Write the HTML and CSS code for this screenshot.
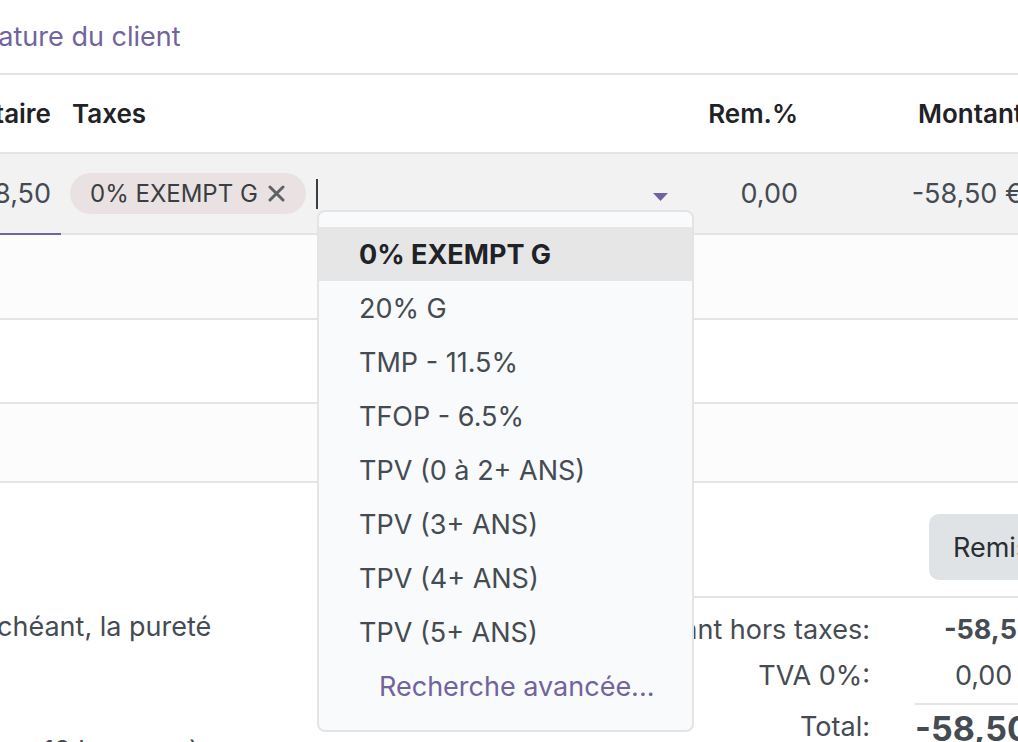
FILE: index.html
```html
<!DOCTYPE html>
<html lang="fr">
<head>
<meta charset="utf-8">
<title>Facture</title>
<link rel="stylesheet" href="styles.css">
</head>
<body>
<div class="page">
  <div class="top">
    <a class="sig-link" href="#">Signature du client</a>
  </div>

  <div class="lines">
    <div class="cell head c1">Prix unitaire</div>
    <div class="cell head c2">Taxes</div>
    <div class="cell head c3">Rem.%</div>
    <div class="cell head c4">Montant</div>

    <div class="cell data c1"><span class="input">-58,50</span></div>
    <div class="cell data c2">
      <span class="tag">0% EXEMPT G
        <svg class="tag-x" width="17" height="17" viewBox="0 0 17 17"><path d="M2 2 L15 15 M15 2 L2 15" stroke="#5e6166" stroke-width="3" stroke-linecap="round"/></svg>
      </span>
      <span class="caret-cursor"></span>
      <span class="grow"></span>
      <svg class="dd-caret" width="15" height="8" viewBox="0 0 15 8"><path d="M0 0 H15 L7.5 8 Z" fill="#71639e"/></svg>
    </div>
    <div class="cell data c3">0,00</div>
    <div class="cell data c4">-58,50 €</div>

    <div class="empty e1"></div>
    <div class="empty e2"></div>
    <div class="empty e3"></div>
  </div>

  <div class="bottom">
    <div class="notes">
      <p class="note n1">Le cas échéant, la pureté</p>
      <p class="note n2">18 k, roses à</p>
    </div>
    <div class="summary">
      <div class="btn-row"><button class="btn">Remise globale</button></div>
      <div class="totals">
        <div class="t-label">Montant hors taxes:</div>
        <div class="t-val strong">-58,50 €</div>
        <div class="t-label">TVA 0%:</div>
        <div class="t-val tva">0,00 €</div>
        <div class="t-label total">Total:</div>
        <div class="t-val total-val">-58,50 €</div>
      </div>
    </div>
  </div>

  <div class="dropdown">
    <div class="dd-item active">0% EXEMPT G</div>
    <div class="dd-item">20% G</div>
    <div class="dd-item">TMP - 11.5%</div>
    <div class="dd-item">TFOP - 6.5%</div>
    <div class="dd-item">TPV (0 à 2+ ANS)</div>
    <div class="dd-item">TPV (3+ ANS)</div>
    <div class="dd-item">TPV (4+ ANS)</div>
    <div class="dd-item">TPV (5+ ANS)</div>
    <div class="dd-item more">Recherche avancée...</div>
  </div>
</div>
</body>
</html>
```
FILE: styles.css
```css
html, body {
  margin: 0;
  padding: 0;
  background: #ffffff;
  overflow: hidden;
}
body {
  font-family: Inter, "Noto Sans", sans-serif;
  font-size: 27px;
  color: #454b52;
  width: 1018px;
  height: 742px;
}
.page {
  position: relative;
  margin-left: -200px;
  width: 1260px;
}
.top {
  height: 73px;
  display: flex;
  align-items: center;
  padding-left: 142px;
  border-bottom: 2px solid #e4e4e4;
}
.sig-link {
  color: #71639e;
  text-decoration: none;
}
.lines {
  display: grid;
  grid-template-columns: 261px 639px 108px 252px;
  grid-template-rows: 79px 81px 85px 84px 79px;
}
.cell {
  display: flex;
  align-items: center;
  border-bottom: 2px solid #e4e4e4;
}
.head {
  font-size: 26px;
  font-weight: 600;
  color: #1f2226;
}
.data {
  background: #f2f2f2;
}
.c1 { justify-content: flex-end; padding-right: 10px; }
.c2 { padding-left: 11px; }
.c3 { justify-content: flex-end; padding-right: 10px; }
.c4 { justify-content: flex-end; padding-right: 37px; }
.data.c1 {
  border-bottom-color: #71639e;
}
.data.c2 { padding-left: 9px; padding-right: 32px; }
.tag {
  display: inline-flex;
  align-items: center;
  height: 41px;
  padding: 0 21px 0 20px;
  border-radius: 21px;
  background: #eae2e2;
  color: #3a3e43;
  font-size: 24px;
  white-space: nowrap;
}
.tag-x {
  display: block;
  margin-left: 10px;
}
.caret-cursor {
  width: 2px;
  height: 30px;
  margin-left: 10px;
  background: #3a3e43;
}
.grow { flex: 1; }
.dd-caret { display: block; margin-top: 6px; }
.empty {
  grid-column: 1 / -1;
  border-bottom: 2px solid #e4e4e4;
}
.e1, .e3 { background: #fcfcfd; }
.e2 { background: #ffffff; }

.bottom {
  display: grid;
  grid-template-columns: 800px 460px;
}
.notes {
  padding-top: 126px;
  padding-left: 90px;
}
.note {
  margin: 0;
  line-height: 36px;
  white-space: nowrap;
}
.n2 { margin-top: 88px; padding-left: 153px; }
.summary {
  padding-top: 31px;
}
.btn-row {
  display: flex;
  padding-left: 329px;
  padding-bottom: 16px;
  border-bottom: 2px solid #e4e4e4;
}
.btn {
  font: inherit;
  color: #2a2e33;
  height: 66px;
  padding: 0 24px;
  border: none;
  border-radius: 10px;
  background: #e0e3e6;
  white-space: nowrap;
}
.totals {
  display: grid;
  grid-template-columns: 270px 145px;
  column-gap: 45px;
  padding-top: 9px;
}
.t-label {
  text-align: right;
  line-height: 46px;
  white-space: nowrap;
}
.t-val {
  text-align: right;
  line-height: 46px;
  white-space: nowrap;
}
.tva { padding-right: 22px; }
.strong { font-weight: 700; }
.total { line-height: 48px; margin-top: 4px; }
.total-val {
  font-size: 34px;
  font-weight: 700;
  line-height: 48px;
  border-top: 2px solid #e4e4e4;
  margin-top: 4px;
}

.dropdown {
  position: absolute;
  left: 517px;
  top: 210px;
  width: 373px;
  padding: 15px 0 17px;
  background: #f9fafb;
  border: 2px solid #e2e4e6;
  border-radius: 8px;
}
.dd-item {
  height: 54px;
  display: flex;
  align-items: center;
  padding-left: 40px;
  color: #454b52;
  white-space: nowrap;
}
.dd-item.active {
  background: #e6e6e6;
  font-weight: 700;
  color: #1f2226;
}
.dd-item.more {
  padding-left: 60px;
  color: #71639e;
}
```
